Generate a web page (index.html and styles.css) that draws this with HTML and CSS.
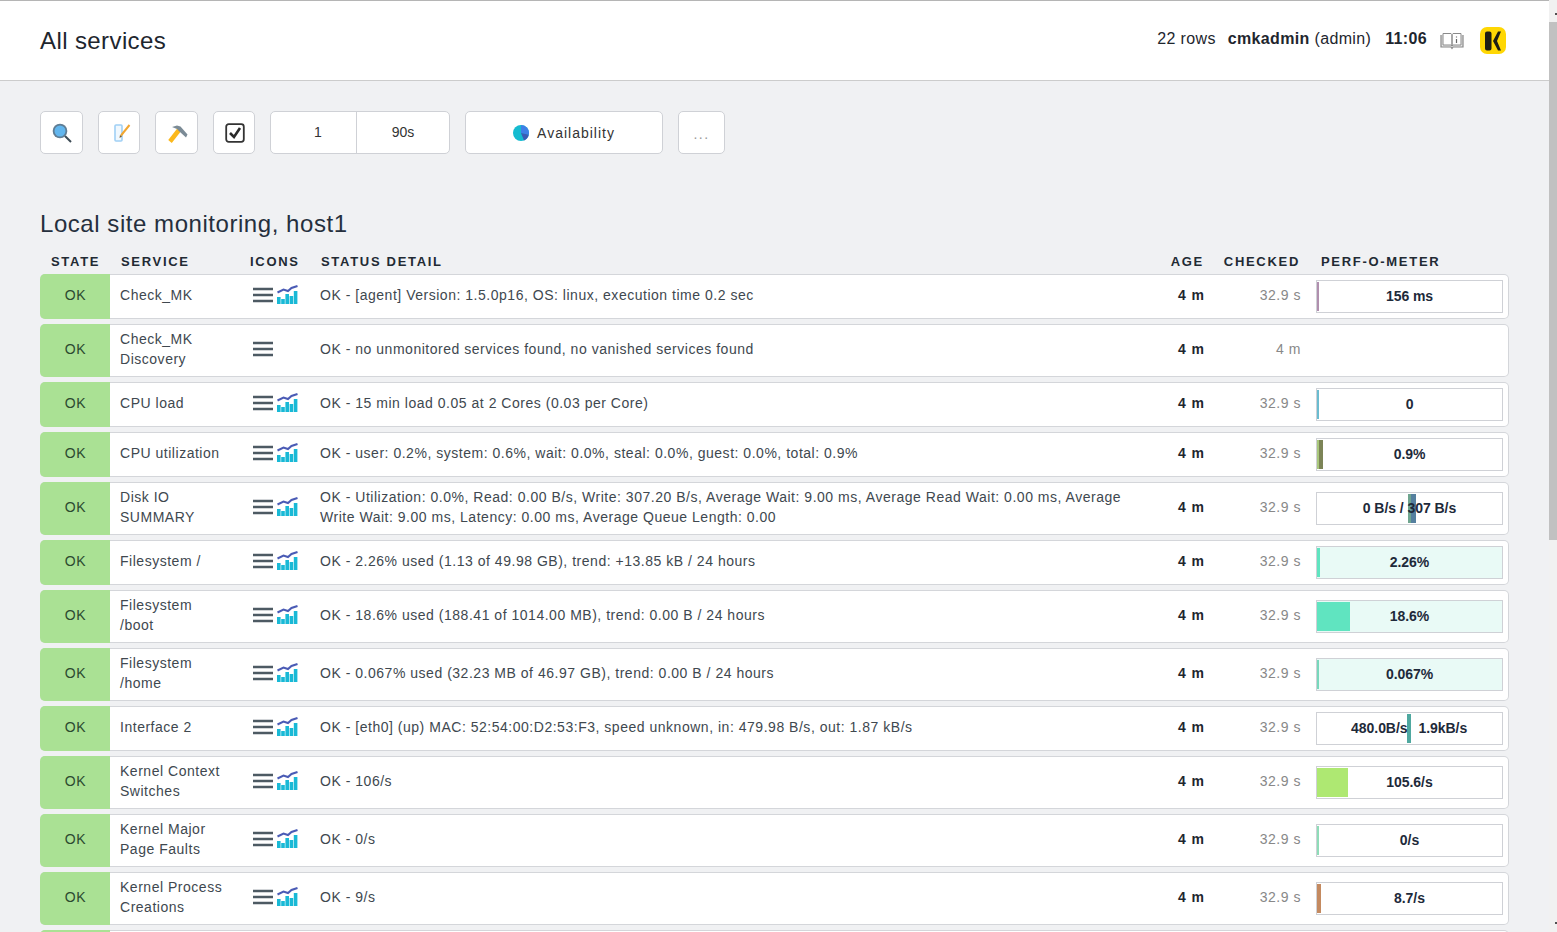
FILE: index.html
```html
<!DOCTYPE html>
<html lang="en">
<head>
<meta charset="utf-8">
<title>All services</title>
<link rel="stylesheet" href="styles.css">
</head>
<body>
<svg class="defs" width="0" height="0">
  <symbol id="ic-menu" viewBox="0 0 20 16">
    <path d="M0 2h20M0 8h20M0 14h20" stroke="#4d5a63" stroke-width="2.4" fill="none"/>
  </symbol>
  <symbol id="ic-graph" viewBox="0 0 21 19">
    <path d="M0.500 7.500L6.500 4.500 11 6l3.500-3L20.500 1" stroke="#4a5bb5" stroke-width="2" fill="none"/>
    <path d="M0 12h3.600v7H0zM4.200 14h3.600v5H4.200zM8.400 9h3.600v10H8.400zM12.600 11h3.600v8h-3.600zM16.800 6h3.600v13h-3.600z" fill="#19b9d6"/>
  </symbol>
</svg>
<div class="page">
  <header class="topbar">
    <h1>All services</h1>
    <div class="topinfo">
      <span class="rows">22 rows</span>
      <span class="user"><b>cmkadmin</b> (admin)</span>
      <b class="clock">11:06</b>
      <svg class="book" width="24" height="18" viewBox="0 0 24 18">
        <path d="M1 3v12h10l1 1.500 1-1.500h10V3" fill="#e6e6e6" stroke="#888" stroke-width="1.200"/>
        <path d="M3 1.500h8l1 1v11.500l-1-1H3zM21 1.500h-8l-1 1v11.500l1-1h8z" fill="#fff" stroke="#8a8a8a"/>
        <path d="M16.500 4.500v1M16.500 7v4" stroke="#666" stroke-width="1.200"/>
      </svg>
      <svg class="logo" width="26" height="27" viewBox="0 0 26 27">
        <rect width="26" height="27" rx="7" fill="#ffd703"/>
        <path d="M5 6.500a2 2 0 0 1 2-2h2.500a2 2 0 0 1 2 2v15a2 2 0 0 1-2 2H7a2 2 0 0 1-2-2zM13 14l5-9.500h3L17 14l4 9.500h-3z" fill="#1d1d14"/>
      </svg>
    </div>
  </header>

  <main class="content">
    <div class="toolbar">
      <a class="btn btn-icon">
        <svg width="22" height="22" viewBox="0 0 22 22">
          <path d="M14 14l6 6" stroke="#3d4b55" stroke-width="2"/>
          <circle cx="9" cy="9" r="7.300" fill="#5f7d94"/>
          <circle cx="9" cy="9" r="5.500" fill="#62b6ee"/>
        </svg>
      </a>
      <a class="btn btn-icon btn-edit">
        <svg width="24" height="22" viewBox="0 0 24 22">
          <rect x="8" y="3" width="7" height="16" rx="1" fill="#f0f8fe" stroke="#a0d0f5" stroke-width="1.600"/>
          <path d="M14 13.500L22.500 3" stroke="#f2a630" stroke-width="2"/>
          <path d="M12.500 16l.5-3 2 1.500z" fill="#7a5a2a"/>
        </svg>
      </a>
      <a class="btn btn-icon btn-hammer">
        <svg width="22" height="22" viewBox="0 0 22 22">
          <path d="M4 19.500L13 8" stroke="#fbb81c" stroke-width="4.500"/>
          <path d="M6 5l5-1.500 3.500 1L21.500 12.500l-1.500 3L14 10 11 7z" fill="#7b8b96"/>
        </svg>
      </a>
      <a class="btn btn-icon btn-check">
        <svg width="20" height="20" viewBox="0 0 20 20">
          <rect x="1.200" y="1.200" width="17.600" height="17.600" rx="2.500" fill="#fff" stroke="#333" stroke-width="1.800"/>
          <path d="M5 10l4 4 6-9" stroke="#2b2b2b" stroke-width="2.600" fill="none"/>
        </svg>
      </a>
      <div class="btn btn-pair">
        <span class="pair-l">1</span>
        <span class="pair-r">90s</span>
      </div>
      <a class="btn btn-avail">
        <svg width="16" height="16" viewBox="0 0 16 16">
          <circle cx="8" cy="8" r="8" fill="#15bbd0"/>
          <path d="M8 8V0a8 8 0 0 1 7.800 9.800z" fill="#3f7fe6"/>
          <path d="M8 8l7.800 1.800A8 8 0 0 1 11 15.500z" fill="#3b5bb5"/>
        </svg>
        Availability
      </a>
      <a class="btn btn-more">...</a>
    </div>

    <h2>Local site monitoring, host1</h2>

    <div class="cols">
      <span class="c-state">STATE</span>
      <span class="c-service">SERVICE</span>
      <span class="c-icons">ICONS</span>
      <span class="c-detail">STATUS DETAIL</span>
      <span class="c-age">AGE</span>
      <span class="c-checked">CHECKED</span>
      <span class="c-perf">PERF-O-METER</span>
    </div>

    <div class="row">
      <div class="state">OK</div>
      <div class="service">Check_MK</div>
      <div class="icons"><svg class="i-menu"><use href="#ic-menu"/></svg><svg class="i-graph"><use href="#ic-graph"/></svg></div>
      <div class="detail">OK - [agent] Version: 1.5.0p16, OS: linux, execution time 0.2 sec</div>
      <div class="age">4 m</div>
      <div class="checked">32.9 s</div>
      <div class="perf"><div class="meter"><i class="fill mauve" style="width:2px"></i><span>156 ms</span></div></div>
    </div>

    <div class="row tall">
      <div class="state">OK</div>
      <div class="service">Check_MK<br>Discovery</div>
      <div class="icons"><svg class="i-menu"><use href="#ic-menu"/></svg></div>
      <div class="detail">OK - no unmonitored services found, no vanished services found</div>
      <div class="age">4 m</div>
      <div class="checked">4 m</div>
      <div class="perf"></div>
    </div>

    <div class="row">
      <div class="state">OK</div>
      <div class="service">CPU load</div>
      <div class="icons"><svg class="i-menu"><use href="#ic-menu"/></svg><svg class="i-graph"><use href="#ic-graph"/></svg></div>
      <div class="detail">OK - 15 min load 0.05 at 2 Cores (0.03 per Core)</div>
      <div class="age">4 m</div>
      <div class="checked">32.9 s</div>
      <div class="perf"><div class="meter"><i class="fill sky" style="width:2px"></i><span>0</span></div></div>
    </div>

    <div class="row">
      <div class="state">OK</div>
      <div class="service">CPU utilization</div>
      <div class="icons"><svg class="i-menu"><use href="#ic-menu"/></svg><svg class="i-graph"><use href="#ic-graph"/></svg></div>
      <div class="detail">OK - user: 0.2%, system: 0.6%, wait: 0.0%, steal: 0.0%, guest: 0.0%, total: 0.9%</div>
      <div class="age">4 m</div>
      <div class="checked">32.9 s</div>
      <div class="perf"><div class="meter"><i class="fill sage" style="width:2px"></i><i class="fill olive" style="width:4px"></i><span>0.9%</span></div></div>
    </div>

    <div class="row tall">
      <div class="state">OK</div>
      <div class="service">Disk IO<br>SUMMARY</div>
      <div class="icons"><svg class="i-menu"><use href="#ic-menu"/></svg><svg class="i-graph"><use href="#ic-graph"/></svg></div>
      <div class="detail">OK - Utilization: 0.0%, Read: 0.00 B/s, Write: 307.20 B/s, Average Wait: 9.00 ms, Average Read Wait: 0.00 ms, Average Write Wait: 9.00 ms, Latency: 0.00 ms, Average Queue Length: 0.00</div>
      <div class="age">4 m</div>
      <div class="checked">32.9 s</div>
      <div class="perf"><div class="meter disk"><i class="mid read" style="width:3px"></i><i class="mid-r write" style="width:5px"></i><span>0 B/s / 307 B/s</span></div></div>
    </div>

    <div class="row">
      <div class="state">OK</div>
      <div class="service">Filesystem /</div>
      <div class="icons"><svg class="i-menu"><use href="#ic-menu"/></svg><svg class="i-graph"><use href="#ic-graph"/></svg></div>
      <div class="detail">OK - 2.26% used (1.13 of 49.98 GB), trend: +13.85 kB / 24 hours</div>
      <div class="age">4 m</div>
      <div class="checked">32.9 s</div>
      <div class="perf"><div class="meter mint"><i class="fill used" style="width:3px"></i><span>2.26%</span></div></div>
    </div>

    <div class="row tall">
      <div class="state">OK</div>
      <div class="service">Filesystem<br>/boot</div>
      <div class="icons"><svg class="i-menu"><use href="#ic-menu"/></svg><svg class="i-graph"><use href="#ic-graph"/></svg></div>
      <div class="detail">OK - 18.6% used (188.41 of 1014.00 MB), trend: 0.00 B / 24 hours</div>
      <div class="age">4 m</div>
      <div class="checked">32.9 s</div>
      <div class="perf"><div class="meter mint"><i class="fill used" style="width:33px"></i><span>18.6%</span></div></div>
    </div>

    <div class="row tall">
      <div class="state">OK</div>
      <div class="service">Filesystem<br>/home</div>
      <div class="icons"><svg class="i-menu"><use href="#ic-menu"/></svg><svg class="i-graph"><use href="#ic-graph"/></svg></div>
      <div class="detail">OK - 0.067% used (32.23 MB of 46.97 GB), trend: 0.00 B / 24 hours</div>
      <div class="age">4 m</div>
      <div class="checked">32.9 s</div>
      <div class="perf"><div class="meter mint"><i class="fill used-low" style="width:2px"></i><span>0.067%</span></div></div>
    </div>

    <div class="row">
      <div class="state">OK</div>
      <div class="service">Interface 2</div>
      <div class="icons"><svg class="i-menu"><use href="#ic-menu"/></svg><svg class="i-graph"><use href="#ic-graph"/></svg></div>
      <div class="detail">OK - [eth0] (up) MAC: 52:54:00:D2:53:F3, speed unknown, in: 479.98 B/s, out: 1.87 kB/s</div>
      <div class="age">4 m</div>
      <div class="checked">32.9 s</div>
      <div class="perf"><div class="meter"><i class="mid if-bar" style="width:3px"></i><i class="mid-r if-bar" style="width:1px"></i><span class="if-in">480.0B/s</span><span class="if-out">1.9kB/s</span></div></div>
    </div>

    <div class="row tall">
      <div class="state">OK</div>
      <div class="service">Kernel Context<br>Switches</div>
      <div class="icons"><svg class="i-menu"><use href="#ic-menu"/></svg><svg class="i-graph"><use href="#ic-graph"/></svg></div>
      <div class="detail">OK - 106/s</div>
      <div class="age">4 m</div>
      <div class="checked">32.9 s</div>
      <div class="perf"><div class="meter"><i class="fill lime" style="width:31px"></i><span>105.6/s</span></div></div>
    </div>

    <div class="row tall">
      <div class="state">OK</div>
      <div class="service">Kernel Major<br>Page Faults</div>
      <div class="icons"><svg class="i-menu"><use href="#ic-menu"/></svg><svg class="i-graph"><use href="#ic-graph"/></svg></div>
      <div class="detail">OK - 0/s</div>
      <div class="age">4 m</div>
      <div class="checked">32.9 s</div>
      <div class="perf"><div class="meter"><i class="fill seafoam" style="width:2px"></i><span>0/s</span></div></div>
    </div>

    <div class="row tall">
      <div class="state">OK</div>
      <div class="service">Kernel Process<br>Creations</div>
      <div class="icons"><svg class="i-menu"><use href="#ic-menu"/></svg><svg class="i-graph"><use href="#ic-graph"/></svg></div>
      <div class="detail">OK - 9/s</div>
      <div class="age">4 m</div>
      <div class="checked">32.9 s</div>
      <div class="perf"><div class="meter"><i class="fill clay" style="width:4px"></i><span>8.7/s</span></div></div>
    </div>

    <div class="row">
      <div class="state"></div>
    </div>
  </main>
</div>
<div class="scrollbar"><div class="thumb"></div></div>
</body>
</html>
```

FILE: styles.css
```css
html, body {
  height: 100%;
  margin: 0;
  overflow: hidden;
}
body {
  display: flex;
  background-color: #f0f1f3;
  font-family: "Liberation Sans", Arial, sans-serif;
  color: #1e262e;
}
.defs {
  position: absolute;
}
.page {
  flex: 1;
  min-width: 0;
}
/* top title bar */
.topbar {
  display: flex;
  justify-content: space-between;
  align-items: center;
  height: 79px;
  padding: 0 43px 0 40px;
  background-color: #fff;
  border-top: 1px solid #b5b5b5;
  border-bottom: 1px solid #ccc;
}
h1 {
  margin: 0;
  font-size: 24px;
  font-weight: normal;
  letter-spacing: 0.4px;
}
.topinfo {
  display: flex;
  align-items: center;
  font-size: 16px;
  letter-spacing: 0.35px;
}
.rows, .user, .clock {
  padding-bottom: 4px;
}
.rows {
  margin-right: 12px;
}
.user {
  margin-right: 14px;
}
.book {
  margin-left: 13px;
}
.logo {
  margin-left: 16px;
}
/* buttons */
.content {
  padding: 30px 40px 0 40px;
}
.toolbar {
  display: flex;
  height: 43px;
  font-size: 14px;
}
.btn {
  display: flex;
  align-items: center;
  justify-content: center;
  box-sizing: border-box;
  height: 43px;
  background-color: #fff;
  border: 1px solid #cfd1d6;
  border-radius: 5px;
  color: #333;
}
.btn-icon {
  width: 43px;
  margin-right: 15px;
}
.btn-edit {
  width: 42px;
}
.btn-hammer {
  width: 43px;
}
.btn-check {
  width: 42px;
  padding-left: 2px;
}
.btn-pair {
  width: 180px;
  margin-right: 15px;
}
.pair-l, .pair-r {
  flex: 1;
  height: 100%;
  display: flex;
  align-items: center;
  justify-content: center;
  box-sizing: border-box;
  padding-bottom: 2px;
}
.pair-l {
  flex: 0 0 86px;
  padding-left: 9px;
  border-right: 1px solid #cfd1d6;
}
.btn-avail {
  width: 198px;
  margin-right: 15px;
  gap: 8px;
  letter-spacing: 1px;
}
.btn-avail svg {
  flex: none;
}
.btn-more {
  width: 47px;
  color: #999;
  letter-spacing: 1.5px;
  padding-top: 2px;
}
h2 {
  margin: 56px 0 0;
  font-size: 24px;
  line-height: 28px;
  font-weight: normal;
  letter-spacing: 0.55px;
  color: #252f3d;
}
/* table */
.cols, .row {
  display: grid;
  grid-template-columns: 70px 135px 65px 850px 45px 96px 208px;
}
.cols {
  margin: 11px 0 1px;
  height: 24px;
  align-items: center;
  font-size: 13px;
  font-weight: bold;
  letter-spacing: 1.7px;
  color: #222a33;
}
.c-state {
  padding-left: 11px;
}
.c-service {
  padding-left: 11px;
}
.c-icons {
  padding-left: 5px;
}
.c-detail {
  padding-left: 11px;
}
.c-age {
  padding-right: 1px;
  text-align: right;
  white-space: nowrap;
}
.c-checked {
  padding-right: 1px;
  text-align: right;
}
.c-perf {
  padding-left: 20px;
  white-space: nowrap;
}
.row {
  box-sizing: border-box;
  min-height: 45px;
  margin-bottom: 5px;
  background-color: #fff;
  border: 1px solid #d4d6da;
  border-left: 0;
  border-radius: 5px;
  align-items: center;
  font-size: 14px;
  letter-spacing: 0.52px;
  color: #40484f;
}
.row.tall {
  min-height: 53px;
}
.state {
  align-self: stretch;
  box-sizing: border-box;
  margin: -1px 0;
  padding: 0 0 4px 1px;
  display: flex;
  align-items: center;
  justify-content: center;
  background-color: #aae194;
  border-radius: 5px 0 0 5px;
  color: #2c4a30;
  letter-spacing: 0.7px;
}
.service {
  padding: 0 0 4px 10px;
  line-height: 20px;
}
.icons {
  display: flex;
  align-items: center;
  padding: 0 0 4px 8px;
  gap: 4px;
}
.i-menu {
  width: 20px;
  height: 16px;
}
.i-graph {
  width: 21px;
  height: 19px;
}
.detail {
  padding: 0 30px 4px 10px;
  line-height: 20px;
}
.age {
  padding-bottom: 4px;
  font-weight: bold;
  text-align: right;
  color: #1e262e;
  white-space: nowrap;
  letter-spacing: 1px;
}
.checked {
  padding-bottom: 4px;
  text-align: right;
  color: #888;
  white-space: nowrap;
}
.perf {
  padding-left: 15px;
}
/* perf-o-meter boxes */
.meter {
  position: relative;
  display: flex;
  box-sizing: border-box;
  width: 187px;
  height: 33px;
  border: 1px solid #cfd1d6;
  background-color: #fff;
  padding: 1px 0;
}
.meter.mint {
  background-color: #e9faf6;
}
.meter span {
  position: absolute;
  top: 0;
  left: 0;
  right: 0;
  line-height: 31px;
  text-align: center;
  font-size: 14px;
  font-weight: bold;
  letter-spacing: -0.05px;
  color: #1e2a3a;
}
.fill {
  display: block;
}
.mauve { background-color: #b08fae; }
.sky { background-color: #6bbcd0; }
.sage { background-color: #a9c77c; }
.olive { background-color: #7c8457; }
.used { background-color: #60e4c0; }
.used-low { background-color: #78d8bc; }
.lime { background-color: #aee872; }
.seafoam { background-color: #8fdcb8; }
.clay { background-color: #c48a60; }
.read { background-color: #6fa58f; }
.write { background-color: #55809f; }
.if-bar { background-color: #4fa8a0; }
/* in/out meters: bars sit over the centre of the box */
.mid, .mid-r {
  position: absolute;
  top: 1px;
  bottom: 1px;
}
.mid {
  right: 50%;
}
.mid-r {
  left: 50%;
}
.disk .mid {
  right: calc(50% - 1px);
}
.disk .mid-r {
  left: calc(50% + 1px);
}
.meter .if-in {
  right: 50%;
  left: auto;
  padding-right: 2px;
}
.meter .if-out {
  left: 50%;
  right: auto;
  padding-left: 9px;
}
/* page scrollbar */
.scrollbar {
  position: relative;
  flex: 0 0 8px;
  background-color: #f1f1f1;
  padding-top: 22px;
}
.thumb {
  height: 518px;
  background-color: #c1c1c1;
}
.scrollbar::before, .scrollbar::after {
  content: "";
  position: absolute;
  right: 0;
  width: 2px;
  height: 2px;
  background-color: #505050;
}
.scrollbar::before {
  top: 13px;
}
.scrollbar::after {
  top: 922px;
}
```
